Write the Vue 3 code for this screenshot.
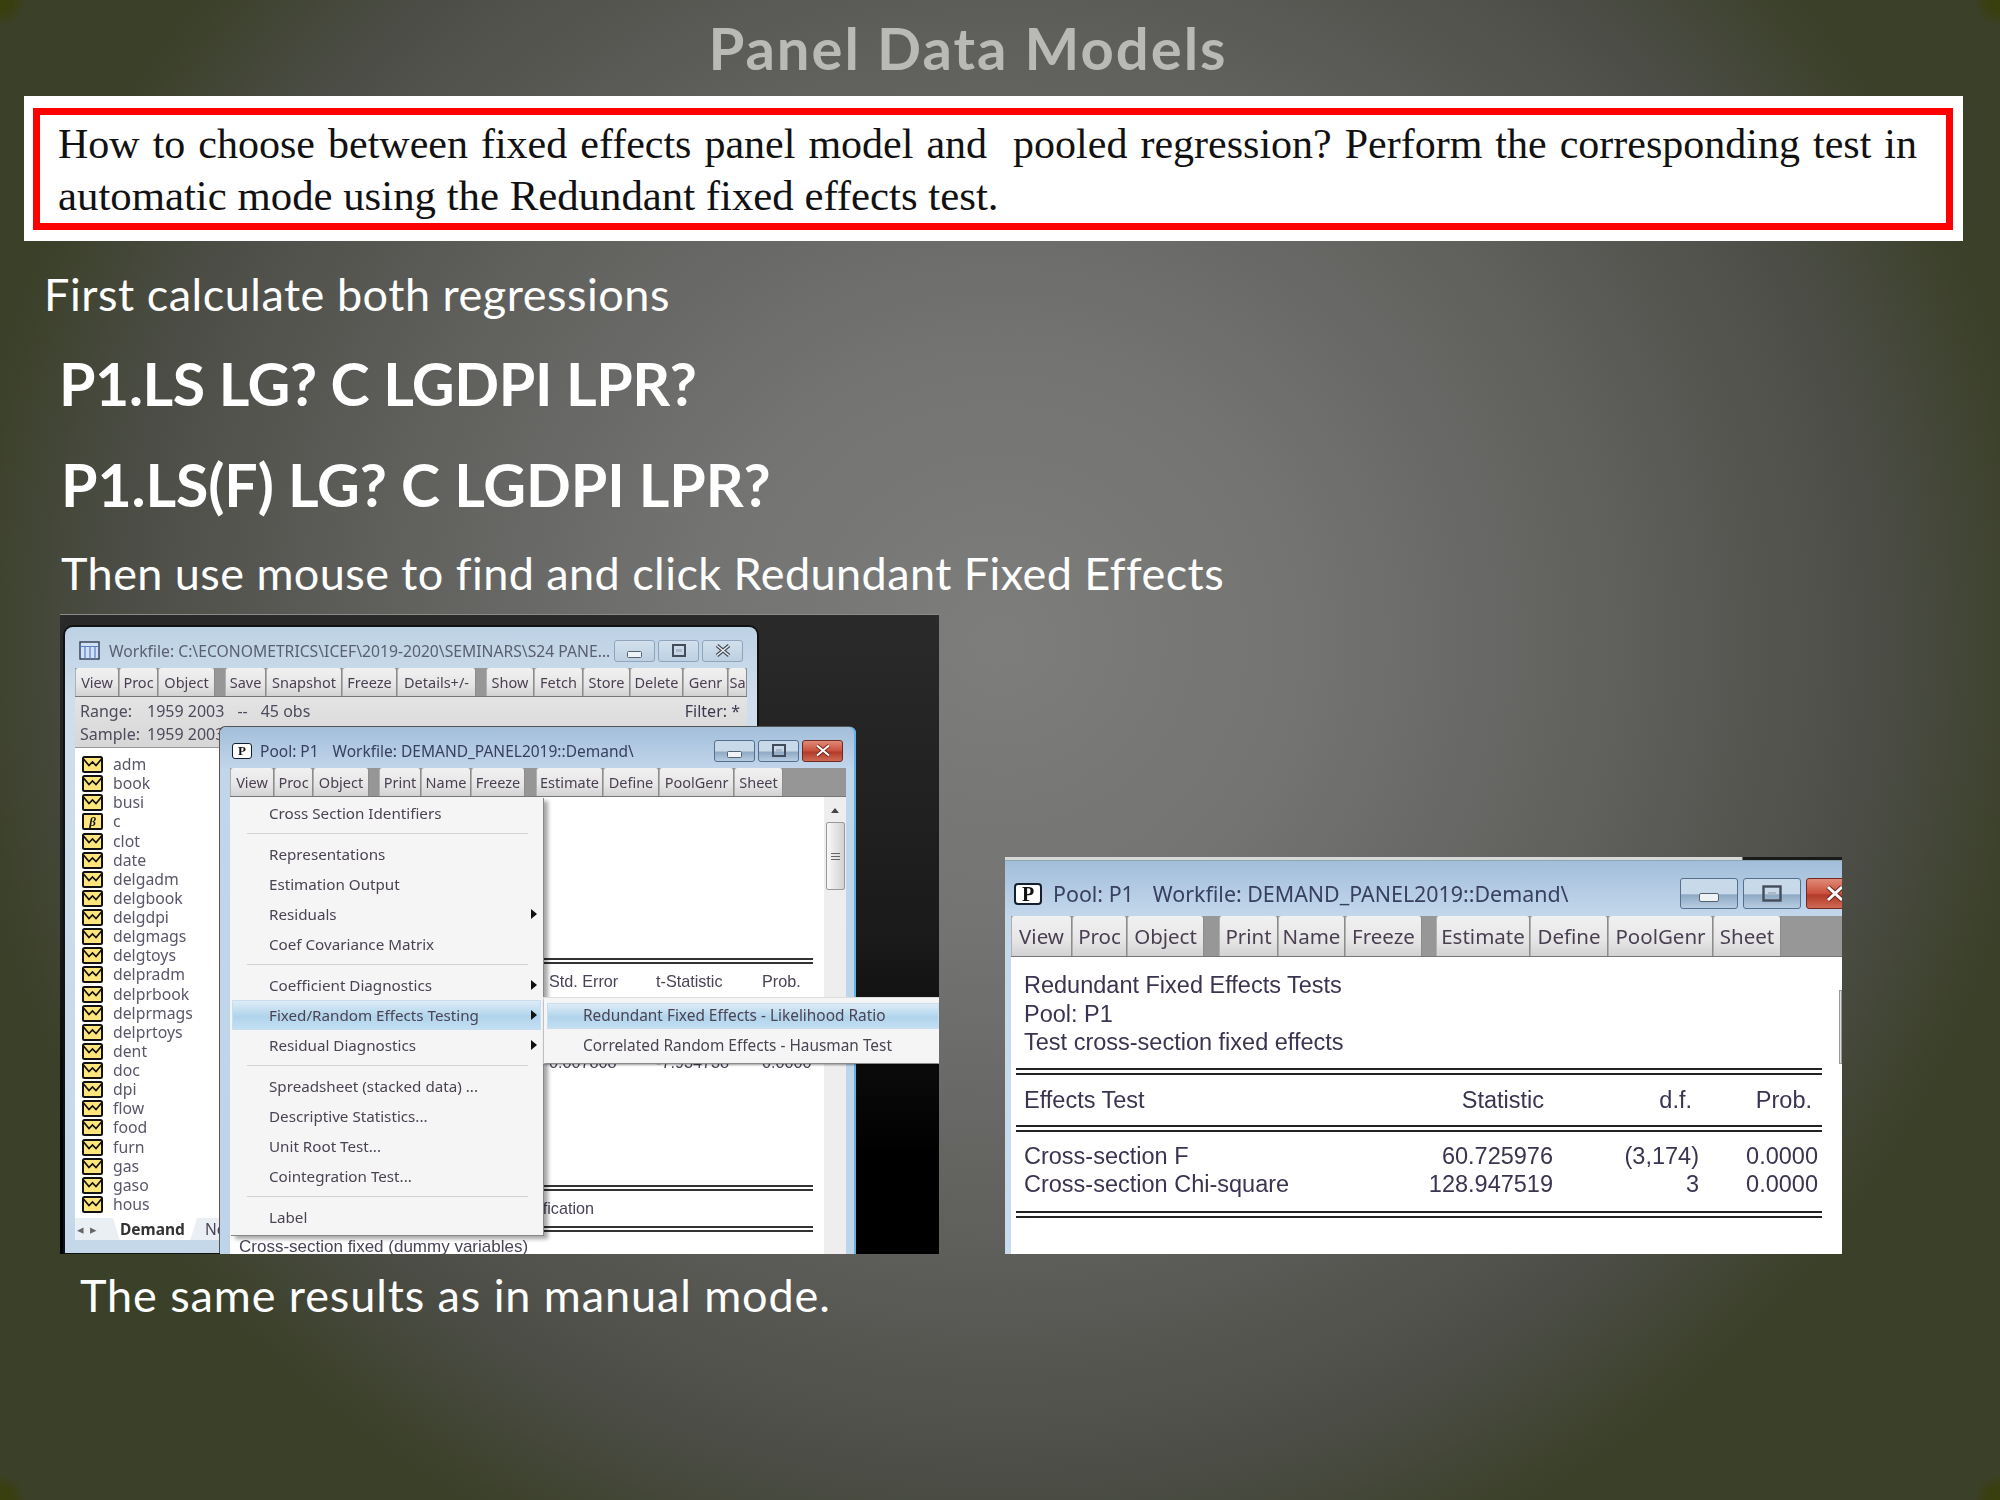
<script setup>
const wfTools = [
  { t: 'View', w: 44 }, { t: 'Proc', w: 39 }, { t: 'Object', w: 57 }, { gap: 10 },
  { t: 'Save', w: 41 }, { t: 'Snapshot', w: 76 }, { t: 'Freeze', w: 55 }, { t: 'Details+/-', w: 79 }, { gap: 10 },
  { t: 'Show', w: 48 }, { t: 'Fetch', w: 49 }, { t: 'Store', w: 47 }, { t: 'Delete', w: 53 }, { t: 'Genr', w: 45 }, { t: 'Sa', w: 19 }
]
const poolTools = [
  { t: 'View', w: 44 }, { t: 'Proc', w: 39 }, { t: 'Object', w: 56 }, { gap: 10 },
  { t: 'Print', w: 42 }, { t: 'Name', w: 50 }, { t: 'Freeze', w: 54 }, { gap: 11 },
  { t: 'Estimate', w: 67 }, { t: 'Define', w: 56 }, { t: 'PoolGenr', w: 75 }, { t: 'Sheet', w: 49 }
]
const bigTools = [
  { t: 'View', w: 61 }, { t: 'Proc', w: 55 }, { t: 'Object', w: 77 }, { gap: 15 },
  { t: 'Print', w: 59 }, { t: 'Name', w: 67 }, { t: 'Freeze', w: 77 }, { gap: 14 },
  { t: 'Estimate', w: 94 }, { t: 'Define', w: 78 }, { t: 'PoolGenr', w: 105 }, { t: 'Sheet', w: 68 }
]
const series = ['adm','book','busi','c','clot','date','delgadm','delgbook','delgdpi','delgmags','delgtoys','delpradm','delprbook','delprmags','delprtoys','dent','doc','dpi','flow','food','furn','gas','gaso','hous']
const menu = [
  { t: 'Cross Section Identifiers' }, { sep: true },
  { t: 'Representations' }, { t: 'Estimation Output' }, { t: 'Residuals', arrow: true }, { t: 'Coef Covariance Matrix' }, { sep: true },
  { t: 'Coefficient Diagnostics', arrow: true }, { t: 'Fixed/Random Effects Testing', arrow: true, active: true }, { t: 'Residual Diagnostics', arrow: true }, { sep: true },
  { t: 'Spreadsheet (stacked data) ...' }, { t: 'Descriptive Statistics...' }, { t: 'Unit Root Test...' }, { t: 'Cointegration Test...' }, { sep: true },
  { t: 'Label' }
]
</script>

<template>
  <main class="slide">
    <h1 class="title">Panel Data Models</h1>
    <section class="task">
      <div class="task-in">
        <p class="task-line l1">How to choose between fixed effects panel model and&nbsp; pooled regression? Perform the corresponding test in</p>
        <p class="task-line l2">automatic mode using the Redundant fixed effects test.</p>
      </div>
    </section>
    <p class="t first">First calculate both regressions</p>
    <p class="t cmd c1">P1.LS LG? C LGDPI LPR?</p>
    <p class="t cmd c2">P1.LS(F) LG? C LGDPI LPR?</p>
    <p class="t then">Then use mouse to find and click Redundant Fixed Effects</p>

    <div class="shots">
      <div class="shot left-shot">
        <div class="wf win">
          <div class="tbar wf-tbar">
            <svg class="wf-ico" width="21" height="19" viewBox="0 0 21 19">
              <rect x="1" y="1" width="19" height="17" fill="#cfe0f8" stroke="#333b4d" stroke-width="1.4" />
              <path d="M1 5.5h19M6 5.5V18M11 5.5V18M16 5.5V18" stroke="#5d7fbf" stroke-width="1.2" fill="none" />
            </svg>
            <span class="wf-title">Workfile: C:\ECONOMETRICS\ICEF\2019-2020\SEMINARS\S24 PANE...</span>
            <span class="ctl-group">
              <span class="ctl min"><svg width="15" height="7"><rect x="0.5" y="0.5" width="14" height="6" rx="1" fill="#eef3f8" stroke="#56606e" /></svg></span>
              <span class="ctl"><svg width="14" height="13"><rect x="1" y="1" width="12" height="11" fill="none" stroke="#434c5a" stroke-width="2" /><rect x="4" y="5" width="6" height="3" fill="#aab8c8" /></svg></span>
              <span class="ctl"><svg width="16" height="13"><path d="M2 1.5 14 11.5M14 1.5 2 11.5" stroke="#3f4650" stroke-width="3.6" /><path d="M2 1.5 14 11.5M14 1.5 2 11.5" stroke="#e8edf2" stroke-width="1.6" /></svg></span>
            </span>
          </div>
          <div class="tools">
            <template v-for="(b, i) in wfTools" :key="i">
              <span v-if="b.gap" :style="{ width: b.gap + 'px' }"></span>
              <span v-else class="btn" :style="{ width: b.w + 'px' }">{{ b.t }}</span>
            </template>
          </div>
          <div class="info">
            <div class="info-row">
              <span class="lab">Range:</span><span>1959 2003</span><span class="dash">--</span><span>45 obs</span><span class="filter">Filter: *</span>
            </div>
            <div class="info-row"><span class="lab">Sample:</span><span>1959 2003</span></div>
          </div>
          <ul class="list">
            <li v-for="s in series" :key="s" class="item">
              <svg v-if="s !== 'c'" width="21" height="17" viewBox="0 0 21 17">
                <rect x="1" y="1" width="19" height="15" rx="1.5" fill="#ffe67c" stroke="#111" stroke-width="2" />
                <path d="M1.5 3 7 9.5l3.5-3.5 3.5 3.5 5.5-6.5" fill="none" stroke="#111" stroke-width="1.7" />
              </svg>
              <span v-else class="beta">β</span>
              <span>{{ s }}</span>
            </li>
          </ul>
          <div class="tabs">
            <span class="tab-arrows"><i>◂</i><i>▸</i></span>
            <span class="tab-on">Demand</span>
            <span class="tab-off">New</span>
          </div>
        </div>

        <div class="pool win">
          <div class="tbar pool-tbar">
            <span class="p-ico">P</span>
            <span class="pool-a">Pool: P1</span>
            <span class="pool-b">Workfile: DEMAND_PANEL2019::Demand\</span>
            <span class="ctl-group active">
              <span class="ctl min"><svg width="15" height="7"><rect x="0.5" y="0.5" width="14" height="6" rx="1" fill="#eef3f8" stroke="#56606e" /></svg></span>
              <span class="ctl"><svg width="14" height="13"><rect x="1" y="1" width="12" height="11" fill="none" stroke="#434c5a" stroke-width="2" /><rect x="4" y="5" width="6" height="3" fill="#aab8c8" /></svg></span>
              <span class="ctl close"><svg width="16" height="13"><path d="M2 1.5 14 11.5M14 1.5 2 11.5" stroke="#6e2a20" stroke-width="3.6" /><path d="M2 1.5 14 11.5M14 1.5 2 11.5" stroke="#fff" stroke-width="2" /></svg></span>
            </span>
          </div>
          <div class="tools">
            <template v-for="(b, i) in poolTools" :key="i">
              <span v-if="b.gap" :style="{ width: b.gap + 'px' }"></span>
              <span v-else class="btn" :style="{ width: b.w + 'px' }">{{ b.t }}</span>
            </template>
          </div>
          <div class="pool-body">
            <div class="results">
              <div class="rule"></div>
              <div class="res-row head"><span>Std. Error</span><span>t-Statistic</span><span>Prob.</span></div>
              <div class="res-row hidden-row"><span>0.007808</span><span>-7.934738</span><span>0.0000</span></div>
              <div class="rule r2"></div>
              <div class="spec">Effects Specification</div>
              <div class="rule"></div>
              <div class="dummy">Cross-section fixed (dummy variables)</div>
            </div>
            <div class="sbar">
              <span class="sb-up"></span>
              <span class="sb-thumb"><i></i><i></i><i></i></span>
            </div>
          </div>
        </div>

        <div class="menu">
          <template v-for="(m, i) in menu" :key="i">
            <div v-if="m.sep" class="sep"></div>
            <div v-else class="mi" :class="{ on: m.active }">
              <span>{{ m.t }}</span><b v-if="m.arrow" class="tri"></b>
            </div>
          </template>
        </div>
        <div class="submenu">
          <div class="si on">Redundant Fixed Effects - Likelihood Ratio</div>
          <div class="si">Correlated Random Effects - Hausman Test</div>
        </div>
      </div>

      <div class="shot right-shot">
        <div class="big-top"></div>
        <div class="big-tbar">
          <span class="p-ico big">P</span>
          <span class="big-a">Pool: P1</span>
          <span class="big-b">Workfile: DEMAND_PANEL2019::Demand\</span>
          <span class="big-ctls">
            <span class="ctl min"><svg width="20" height="9"><rect x="0.5" y="0.5" width="19" height="8" rx="1.5" fill="#eef3f8" stroke="#56606e" /></svg></span>
            <span class="ctl"><svg width="20" height="17"><rect x="1.5" y="1.5" width="17" height="14" fill="none" stroke="#434c5a" stroke-width="2.4" /><rect x="6" y="7" width="8" height="3" fill="#aab8c8" /></svg></span>
            <span class="ctl close"><svg width="24" height="19"><path d="M5 3 19 16M19 3 5 16" stroke="#6e2a20" stroke-width="5" /><path d="M5 3 19 16M19 3 5 16" stroke="#fff" stroke-width="3" /></svg></span>
          </span>
        </div>
        <div class="tools big-tools">
          <template v-for="(b, i) in bigTools" :key="i">
            <span v-if="b.gap" :style="{ width: b.gap + 'px' }"></span>
            <span v-else class="btn" :style="{ width: b.w + 'px' }">{{ b.t }}</span>
          </template>
        </div>
        <div class="big-body">
          <div class="big-line">Redundant Fixed Effects Tests</div>
          <div class="big-line">Pool: P1</div>
          <div class="big-line">Test cross-section fixed effects</div>
          <div class="big-rule first-rule"></div>
          <div class="big-grid head-grid">
            <span>Effects Test</span><span class="pr9">Statistic</span><span class="pr7">d.f.</span><span class="pr6">Prob.</span>
          </div>
          <div class="big-rule"></div>
          <div class="big-grid val first-val">
            <span>Cross-section F</span><span>60.725976</span><span>(3,174)</span><span>0.0000</span>
          </div>
          <div class="big-grid val">
            <span>Cross-section Chi-square</span><span>128.947519</span><span>3</span><span>0.0000</span>
          </div>
          <div class="big-rule last-rule"></div>
          <span class="big-thumb"></span>
        </div>
      </div>
    </div>

    <p class="t last">The same results as in manual mode.</p>
  </main>
</template>

<style>
html, body { margin: 0; background: #3b4028; }
</style>

<style scoped>
.slide {
  width: 2000px;
  height: 1500px;
  overflow: hidden;
  display: flex;
  flex-direction: column;
  font-family: Lato, "Open Sans", sans-serif;
  background:
    radial-gradient(circle 26px at 0 0, #3a3f10 50%, transparent),
    radial-gradient(circle 26px at 100% 0, #3a3f10 50%, transparent),
    radial-gradient(circle 26px at 0 100%, #3a3f10 50%, transparent),
    radial-gradient(circle 26px at 100% 100%, #3a3f10 50%, transparent),
    radial-gradient(ellipse 1040px 1000px at 1000px 640px, #7d7d7b 0, #737372 30%, #5f5f5c 60%, #4b4d45 85%, #3b4029 100%);
}
p, h1, ul { margin: 0; padding: 0; }
.title {
  height: 96px;
  line-height: 96px;
  width: 1936px;
  text-align: center;
  font-size: 58px;
  letter-spacing: 2px;
  font-weight: 700;
  color: #b9bab6;
}
.task {
  margin-left: 24px;
  width: 1939px;
  height: 145px;
  box-sizing: border-box;
  background: #fff;
  padding: 12px 10px 11px 9px;
}
.task-in {
  height: 122px;
  box-sizing: border-box;
  border: 7px solid #f00;
  padding: 4px 0 0 18px;
  font-family: "Liberation Serif", serif;
  color: #111;
  font-size: 42.8px;
}
.task-line { height: 51px; line-height: 51px; white-space: nowrap; }
.l1 { width: 1859px; font-size: 42px; text-align: justify; text-align-last: justify; white-space: normal; }
.t { color: #fff; white-space: nowrap; }
.first { height: 106px; line-height: 106px; padding-left: 44px; font-size: 45px; letter-spacing: .52px; }
.cmd { font-weight: 700; font-size: 59px; }
.c1 { height: 74px; line-height: 74px; padding-left: 59px; letter-spacing: -.4px; }
.c2 { height: 128px; line-height: 128px; padding-left: 61px; letter-spacing: -.1px; }
.then { height: 48px; line-height: 48px; padding-left: 61px; font-size: 45px; letter-spacing: .43px; }
.last { height: 82px; line-height: 82px; padding-left: 80px; font-size: 45px; letter-spacing: .9px; }

.shots {
  margin-top: 17px;
  height: 640px;
  display: flex;
  align-items: flex-end;
  gap: 66px;
  padding-left: 60px;
}
.shot {
  position: relative;
  overflow: hidden;
  font-family: "Noto Sans", sans-serif;
  color: #4a4358;
  filter: blur(0.5px);
}
.left-shot {
  width: 879px;
  height: 640px;
  background: linear-gradient(#2a2a2a, #1a1a1a 50%, #000 85%);
  border-top: 1px solid #8a8a88;
  box-sizing: border-box;
}
.win { position: absolute; box-sizing: border-box; }
.wf {
  left: 5px;
  top: 12px;
  width: 692px;
  height: 626px;
  border-radius: 8px 8px 0 0;
  background: linear-gradient(#bdd2e5, #cfdeec 12%, #c4d8ea);
  padding: 0 10px;
  box-shadow: 0 0 0 2px #111;
  display: flex;
  flex-direction: column;
}
.tbar { display: flex; align-items: center; height: 41px; flex: none; box-sizing: border-box; padding-top: 6px; }
.wf-ico { margin-left: 4px; }
.wf-title { margin-left: 9px; font-size: 15.7px; color: #5b6070; white-space: nowrap; width: 504px; overflow: hidden; }
.ctl-group { display: flex; gap: 3px; margin-left: auto; margin-right: 4px; }
.ctl {
  width: 41px;
  height: 22px;
  box-sizing: border-box;
  border: 1px solid #8ea5bd;
  border-radius: 3px;
  background: linear-gradient(#d2e0ec, #bcd0e2);
  display: flex;
  align-items: center;
  justify-content: center;
}
.ctl.min { padding-top: 7px; }
.ctl-group.active { margin-right: 3px; }
.ctl-group.active .ctl { background: linear-gradient(#c8daea 50%, #8fa9c4 55%, #b7cde2); border-color: #54708e; }
.ctl.close { background: linear-gradient(#e08a78 0, #c9503c 50%, #b23a28 55%, #cf6a55) !important; border-color: #6e2a20 !important; }

.tools { display: flex; height: 29px; flex: none; background: #979797; border-bottom: 1px solid #777; box-sizing: border-box; }
.btn {
  box-sizing: border-box;
  display: flex;
  align-items: center;
  justify-content: center;
  font-size: 14.5px;
  color: #4a3f52;
  background: linear-gradient(#f1f1f1, #e6e6e6 60%, #d2d2d2);
  border-right: 1px solid #8c8c8c;
  border-left: 1px solid #b0b0b0;
  border-radius: 3px 3px 0 0;
  white-space: nowrap;
  overflow: hidden;
}
.info {
  height: 51px;
  flex: none;
  background: linear-gradient(#e4e4e4, #d6d6d6);
  border-bottom: 1px solid #999;
  box-sizing: border-box;
  padding: 3px 7px 0 5px;
  font-size: 16px;
  color: #4f4a5c;
}
.info-row { display: flex; height: 23px; line-height: 23px; white-space: nowrap; }
.lab { width: 67px; flex: none; }
.dash { margin: 0 13px; }
.filter { margin-left: auto; color: #3e3750; }
.list {
  height: 470px;
  flex: none;
  background: #fff;
  list-style: none;
  padding: 7px 0 0 7px;
  box-sizing: border-box;
  overflow: hidden;
}
.item {
  height: 19.13px;
  display: flex;
  align-items: center;
  gap: 10px;
  font-size: 15.8px;
  line-height: 19px;
  color: #5a566a;
}
.item svg { flex: none; }
.beta {
  width: 21px;
  height: 17px;
  box-sizing: border-box;
  flex: none;
  border: 2px solid #111;
  border-radius: 2px;
  background: #ffe67c;
  color: #111;
  font: italic 700 13px/13px "Liberation Serif", serif;
  text-align: center;
}
.tabs { height: 22px; display: flex; align-items: center; background: #eaeff4; font-size: 15.5px; }
.tab-arrows { width: 38px; display: flex; gap: 6px; padding-left: 2px; box-sizing: border-box; font-size: 13px; color: #666; }
.tab-arrows i { font-style: normal; }
.tab-on {
  font-weight: 700;
  color: #333;
  width: 84px;
  padding-left: 7px;
  background: #fff;
  box-sizing: border-box;
  clip-path: polygon(0 0, 100% 0, 92% 100%, 8% 100%);
}
.tab-off { margin-left: 8px; color: #4a4358; }

.pool {
  left: 160px;
  top: 112px;
  width: 636px;
  height: 527px;
  border-radius: 6px 6px 0 0;
  background: linear-gradient(#a3bedb, #c2d6ea 8%, #bdd4e9);
  padding: 0 10px;
  box-shadow: inset -2px 0 0 #60b4e6, -1px -1px 0 #555;
  display: flex;
  flex-direction: column;
}
.pool-tbar { font-size: 15.5px; color: #37405f; }
.p-ico {
  width: 20px;
  height: 16px;
  border: 1.5px solid #15202e;
  border-radius: 3px;
  box-sizing: border-box;
  background: #fff;
  color: #111;
  font: 700 13px/13px "Liberation Serif", serif;
  text-align: center;
  margin-left: 2px;
  flex: none;
}
.pool-a { margin-left: 8px; white-space: nowrap; }
.pool-b { margin-left: 14px; white-space: nowrap; }
.pool .tools { background: #969696; }
.pool-body { flex: 1; display: flex; background: #fff; min-height: 0; }
.results { width: 594px; padding: 161px 11px 0 0; box-sizing: border-box; font-family: "Liberation Sans", sans-serif; font-size: 16.2px; }
.rule { height: 6px; box-sizing: border-box; border-top: 2px solid #333; border-bottom: 2px solid #333; }
.r2 { margin-top: 106px; }
.res-row { display: flex; height: 34px; align-items: center; padding-left: 319px; white-space: nowrap; }
.res-row span:nth-child(1) { width: 107px; }
.res-row span:nth-child(2) { width: 106px; }
.hidden-row { margin-top: 47px; }
.spec { height: 35px; line-height: 35px; text-align: right; padding-right: 219px; }
.dummy { height: 30px; line-height: 30px; padding-left: 9px; white-space: nowrap; font-size: 17px; }
.sbar { width: 22px; background: #eeeeee; display: flex; flex-direction: column; align-items: center; }
.sb-up { margin-top: 11px; width: 0; height: 0; border: 4px solid transparent; border-top: 0; border-bottom: 5px solid #444; }
.sb-thumb {
  margin-top: 9px;
  width: 19px;
  height: 68px;
  box-sizing: border-box;
  border: 1px solid #999;
  border-radius: 2px;
  background: linear-gradient(90deg, #f8f8f8, #d2d2d2);
  display: flex;
  flex-direction: column;
  align-items: center;
  justify-content: center;
  gap: 2px;
}
.sb-thumb i { width: 9px; height: 1px; background: #666; }

.menu {
  position: absolute;
  left: 170px;
  top: 182px;
  width: 313px;
  height: 438px;
  box-sizing: border-box;
  padding: 1px 2px 3px;
  background: #f5f5f5;
  box-shadow: 1px 1px 0 #888, 5px 4px 4px rgba(0,0,0,.35);
  font-size: 15.2px;
}
.mi {
  height: 30px;
  display: flex;
  align-items: center;
  justify-content: space-between;
  padding: 0 4px 0 37px;
  box-sizing: border-box;
  white-space: nowrap;
  color: #4b4352;
}
.mi.on, .si.on {
  background: linear-gradient(#e1eef7, #b0d4ec 55%, #c5e0f3);
  box-shadow: inset 0 0 0 1px #c8deee;
}
.sep { height: 11px; position: relative; margin: 0 13px 0 15px; }
.sep::after { content: ""; position: absolute; left: 0; right: 0; top: 5px; height: 1px; background: #d2d2d2; }
.tri { width: 0; height: 0; border: 5px solid transparent; border-right: 0; border-left: 6px solid #111; }
.submenu {
  position: absolute;
  left: 484px;
  top: 383px;
  width: 395px;
  height: 65px;
  box-sizing: border-box;
  padding: 5px 0 0 3px;
  background: #f5f5f5;
  box-shadow: 0 2px 2px rgba(0,0,0,.4), 0 0 0 1px #ddd;
  font-size: 15.4px;
}
.si { height: 28px; line-height: 30px; padding-left: 36px; color: #4b4352; white-space: nowrap; }
.si.on { height: 26px; line-height: 25px; margin-bottom: 2px; }

.right-shot {
  width: 837px;
  height: 397px;
  background: linear-gradient(#a0bcd9, #c4d8ec 60px, #c9dcee);
}
.big-top { height: 4px; background: linear-gradient(90deg, #d8d8d8 88%, #1a1a1a 88.2%); border-bottom: 1px solid #8aa; box-sizing: border-box; }
.big-tbar { height: 55px; display: flex; align-items: center; font-size: 21.4px; color: #37405f; padding: 10px 0 0 9px; box-sizing: border-box; white-space: nowrap; }
.p-ico.big { width: 28px; height: 22px; border-width: 2px; font-size: 20px; line-height: 18px; margin-left: 0; border-radius: 4px; }
.big-a { margin-left: 11px; }
.big-b { margin-left: 19px; }
.big-ctls { margin-left: auto; display: flex; gap: 5px; margin-right: -22px; }
.big-ctls .ctl { width: 58px; height: 31px; background: linear-gradient(#c8daea 50%, #8fa9c4 55%, #b7cde2); border-color: #54708e; }
.big-tools { height: 41px; margin-left: 6px; }
.big-tools .btn { font-size: 20.5px; }
.big-body {
  position: relative;
  height: 297px;
  margin-left: 6px;
  background: #fff;
  box-sizing: border-box;
  padding: 14px 0 0 13px;
  font-family: "Liberation Sans", sans-serif;
  font-size: 23.5px;
  color: #3b3350;
}
.big-line { height: 28.5px; line-height: 28.5px; white-space: nowrap; }
.big-rule {
  margin-left: -8px;
  width: 806px;
  height: 7px;
  box-sizing: border-box;
  border-top: 2px solid #222;
  border-bottom: 2px solid #222;
}
.first-rule { margin-top: 11px; }
.last-rule { margin-top: 13px; }
.big-grid { display: grid; grid-template-columns: 300px 229px 146px 119px; white-space: nowrap; }
.big-grid span:not(:first-child) { text-align: right; }
.head-grid { height: 50px; line-height: 50px; }
.val { height: 28px; line-height: 28px; }
.first-val { margin-top: 10px; }
.pr9 { padding-right: 9px; }
.pr7 { padding-right: 7px; }
.pr6 { padding-right: 6px; }
.big-thumb { position: absolute; right: 0; top: 33px; width: 3px; height: 74px; background: #ddd; border: 1px solid #999; box-sizing: border-box; }
</style>
